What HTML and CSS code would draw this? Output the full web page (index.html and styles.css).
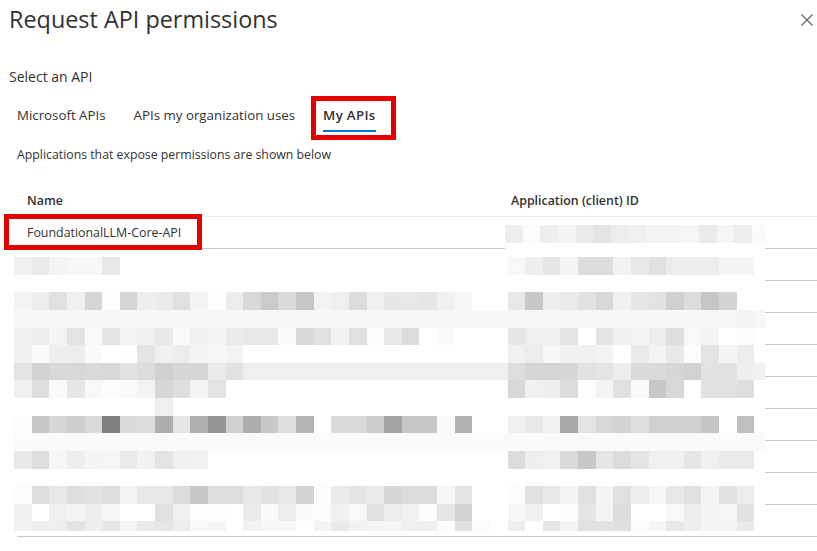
FILE: index.html
```html
<!DOCTYPE html>
<html lang="en">
<head>
<meta charset="utf-8">
<title>Request API permissions</title>
<link rel="stylesheet" href="styles.css">
</head>
<body>
<div class="panel">
  <header class="panel-header">
    <h1 class="panel-title">Request API permissions</h1>
    <button class="close-btn" aria-label="Close">
      <svg width="12" height="12" viewBox="0 0 12 12"><path d="M0.5 0.5 L11.5 11.5 M11.5 0.5 L0.5 11.5" stroke="#605e5c" stroke-width="1.1" fill="none"/></svg>
    </button>
  </header>

  <div class="select-label">Select an API</div>

  <nav class="tabs">
    <span class="tab">Microsoft APIs</span>
    <span class="tab">APIs my organization uses</span>
    <span class="tab tab-active">My APIs</span>
  </nav>

  <p class="subtitle">Applications that expose permissions are shown below</p>

  <div class="table">
    <div class="row row-head">
      <div class="cell cell-name">Name</div>
      <div class="cell cell-id">Application (client) ID</div>
    </div>
    <div class="row">
      <div class="cell cell-name">FoundationalLLM-Core-API</div>
      <div class="cell cell-id"></div>
    </div>
    <div class="row"><div class="cell cell-name"></div><div class="cell cell-id"></div></div>
    <div class="row"><div class="cell cell-name"></div><div class="cell cell-id"></div></div>
    <div class="row"><div class="cell cell-name"></div><div class="cell cell-id"></div></div>
    <div class="row"><div class="cell cell-name"></div><div class="cell cell-id"></div></div>
    <div class="row"><div class="cell cell-name"></div><div class="cell cell-id"></div></div>
    <div class="row"><div class="cell cell-name"></div><div class="cell cell-id"></div></div>
    <div class="row"><div class="cell cell-name"></div><div class="cell cell-id"></div></div>
    <div class="row"><div class="cell cell-name"></div><div class="cell cell-id"></div></div>
    <div class="row"><div class="cell cell-name"></div><div class="cell cell-id"></div></div>

    <div class="redact redact-top" id="redact-top"></div>
    <div class="redact redact-main" id="redact-main"></div>
    <div class="annot annot-row"></div>
  </div>
</div>
<script src="script.js"></script>
</body>
</html>
```

FILE: styles.css
```css
* { box-sizing: border-box; }

body {
  margin: 0;
  background: #ffffff;
  color: #323130;
  font-family: "Open Sans", "Noto Sans", sans-serif;
}

.panel {
  padding: 0 4px 0 9px;
}

.panel-header {
  display: flex;
  justify-content: space-between;
  align-items: flex-start;
  height: 56px;
}

.panel-title {
  margin: 0;
  padding-top: 3px;
  font-size: 23.4px;
  line-height: 32px;
  font-weight: 400;
  color: #323130;
}

.close-btn {
  margin-top: 14px;
  padding: 0;
  border: 0;
  background: transparent;
  width: 12px;
  height: 12px;
  display: flex;
}

.select-label {
  margin-top: 11px;
  font-size: 14px;
  line-height: 20px;
}

.tabs {
  display: flex;
  gap: 28px;
  margin: 17px 0 0 8px;
  font-size: 13.3px;
}

.tab {
  line-height: 20px;
  padding: 1px 0 5px;
  border-bottom: 2px solid transparent;
  color: #323130;
}

.tab-active {
  position: relative;
  font-weight: 600;
  letter-spacing: 0.3px;
  border-bottom-color: #0078d4;
}

.tab-active::after {
  content: "";
  position: absolute;
  left: -12px;
  right: -20px;
  top: -8px;
  bottom: -10px;
  border: 5px solid #e60000;
}

.subtitle {
  margin: 14px 0 0 8px;
  font-size: 12.3px;
  line-height: 18px;
}

.table {
  position: relative;
  margin: 21px 0 0 8px;
  width: 800px;
  font-size: 12.4px;
}

.row {
  display: flex;
  height: 32px;
  border-bottom: 1px solid #c8c8c8;
  align-items: center;
}

.row-head {
  border-bottom-color: #ebebeb;
  font-weight: 600;
}

.cell {
  padding-left: 10px;
}

.cell-name {
  width: 484px;
}

.cell-id {
  flex: 1;
}

.redact {
  position: absolute;
  background: #ffffff;
  padding-top: 7px;
  overflow: hidden;
  display: grid;
  grid-auto-rows: 17.64px;
  align-content: start;
}

.redact-top {
  left: 488px;
  top: 33px;
  width: 260px;
  height: 32px;
  grid-template-columns: repeat(15, 17.64px);
}

.redact-main {
  left: -3px;
  top: 65px;
  width: 751px;
  height: 281px;
  grid-template-columns: repeat(43, 17.64px);
}

.annot {
  position: absolute;
  border: 5px solid #e60000;
}

.annot-row {
  left: -13px;
  top: 29px;
  width: 198px;
  height: 36px;
}
```

FILE: script.js
```js
(function () {
  var main = [
    "f0 ea f4 f7 f7 e8 ff*22 f8 ee e6 f4 dd dd f2 e8 e0 ec ec ec f5 f5 ff",
    "ff*43",
    "f4 ed e0 f0 d5 fd d6 ee eb e0 f3 fe ec d8 cb da c6 f3 ef dc f0 e7 e8 e6 f0 f7 ff ff e8 c8 ee eb e2 d8 f0 e6 e2 d0 dc c6 d4 ff ff",
    "f7*41 f4 f7",
    "f0 ec f4 e3 f9 e4 f3 ef e8 f9 ef f4 ea e8 e8 fa d8 e0 f2 e0 fc e9 dc ff fa ff ff ff e6 ef f0 e3 ff e4 f0 f4 ec de f8 f4 ff fc ff",
    "f0 fa ee ed fa ff fe e4 f0 ec f4 f6 f3 ff*15 f0 ec f7 f0 f0 f3 ff ea f3 e8 fb e3 f4 ec ff",
    "e3 d2 d8 d8 da d8 e2 dd d0 d6 d6 eb e2 ef*15 de d5 d5 d6 e2 e4 ed da da d6 d2 e2 e2 ee f0",
    "f0 de fa e6 f8 fc f9 f3 d6 de f3 e3 ff*16 d8 f0 ec dc fd f3 e0 fa c8 d8 ff e2 e2 de ff",
    "ff*8 ef ff*34",
    "fc c8 d6 cf da 7f da dd ad e6 b0 96 d0 ad c8 de b4 ff da da cc a3 c8 c8 fa b2 ff ff ef e8 f2 a8 e3 d8 d4 de d0 d0 d0 c4 ff bf ff",
    "fa*43",
    "e8 de f6 ed f4 f6 ea f2 e3 f0 f2 ff*17 dc ee f2 da c8 e6 dc e4 f0 f0 e6 f0 ea ea ff",
    "ff*43",
    "fc de e8 de e2 de f3 e8 e8 dc c8 de de e8 e2 e8 d2 fc ea e4 ea d6 dc dc f6 e4 ff ff fc e0 e8 f4 e0 f4 e0 ee f6 e8 e0 f4 e2 ed ff",
    "f0 ff ef f4 ee f6 ff ff e0 f0 fd fd ff ea fa ec fa fc f0 f8 e0 ec f2 fc e6 d2 ff ff f6 f0 ff fc e4 f4 dc ff ff f8 ec f4 f6 e2 ff",
    "f2 ee ee e4 ee e6 f4 ea e6 ec f8 f6 ff f2 f6 f8 ff f4 ea f2 f4 f4 ef ef fc e0 fa ff ee ff e6 f4 e0 e2 e0 fc f6 e8 ee f4 f4 ea ff"
  ];
  var top = ["ee fc ee f4 eb e4 ec ef f3 f3 f6 ea f6 ec fa"];

  function expand(row) {
    var out = [];
    row.split(" ").forEach(function (tok) {
      var parts = tok.split("*");
      var n = parts.length > 1 ? parseInt(parts[1], 10) : 1;
      for (var i = 0; i < n; i++) out.push(parts[0]);
    });
    return out;
  }

  function fill(id, rows) {
    var box = document.getElementById(id);
    rows.forEach(function (row) {
      expand(row).forEach(function (g) {
        var s = document.createElement("span");
        s.style.background = "#" + g + g + g;
        box.appendChild(s);
      });
    });
  }

  fill("redact-top", top);
  fill("redact-main", main);
})();
```
